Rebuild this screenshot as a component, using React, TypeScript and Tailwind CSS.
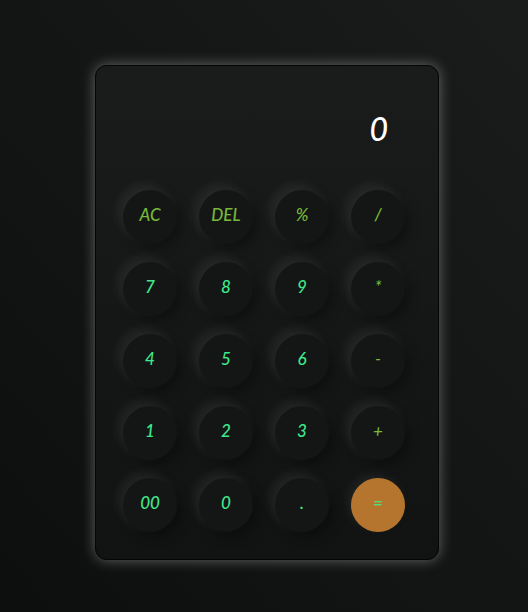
const keys = [
  { label: 'AC', kind: 'op' },
  { label: 'DEL', kind: 'op' },
  { label: '%', kind: 'op' },
  { label: '/', kind: 'op' },
  { label: '7', kind: 'num' },
  { label: '8', kind: 'num' },
  { label: '9', kind: 'num' },
  { label: '*', kind: 'op' },
  { label: '4', kind: 'num' },
  { label: '5', kind: 'num' },
  { label: '6', kind: 'num' },
  { label: '-', kind: 'op' },
  { label: '1', kind: 'num' },
  { label: '2', kind: 'num' },
  { label: '3', kind: 'num' },
  { label: '+', kind: 'op' },
  { label: '00', kind: 'num' },
  { label: '0', kind: 'num' },
  { label: '.', kind: 'num' },
  { label: '=', kind: 'eq' },
]

export default function App() {
  return (
    <div
      className="w-[528px] h-[612px] flex pl-[95px] pt-[65px] bg-gradient-to-tr from-[#0d0f0e] to-[#1a1c1b]"
      style={{ fontFamily: '"Lato", "Noto Sans", sans-serif' }}
    >
      <div className="w-[344px] h-[495px] rounded-[12px] border border-[#050505] bg-gradient-to-b from-[#1a1c1b] to-[#111312] shadow-[0_0_14px_rgba(255,255,255,0.35)] flex flex-col">
        <div className="h-[124px] flex items-center justify-end pr-[50px] pt-[1px]">
          <span className="text-white text-[32px] italic font-medium leading-none">0</span>
        </div>
        <div className="grid grid-cols-[repeat(4,54px)] gap-x-[22px] gap-y-[18px] pl-[27px]">
          {keys.map(k => (
            <button
              key={k.label}
              className={
                'w-[54px] h-[54px] rounded-full flex items-center justify-center italic font-medium text-[17px] leading-none pb-[5px] ' +
                (k.kind === 'eq'
                  ? 'bg-[#b5752f] text-[#4be07f] shadow-[-4px_-4px_12px_rgba(255,255,255,0.06)]'
                  : 'bg-[#141615] shadow-[-5px_-5px_12px_rgba(255,255,255,0.08),5px_5px_12px_rgba(0,0,0,0.35)] ') +
                (k.kind === 'op' ? 'text-[#78b93a]' : k.kind === 'num' ? 'text-[#3eea8c]' : '')
              }
            >
              {k.label}
            </button>
          ))}
        </div>
      </div>
    </div>
  )
}
